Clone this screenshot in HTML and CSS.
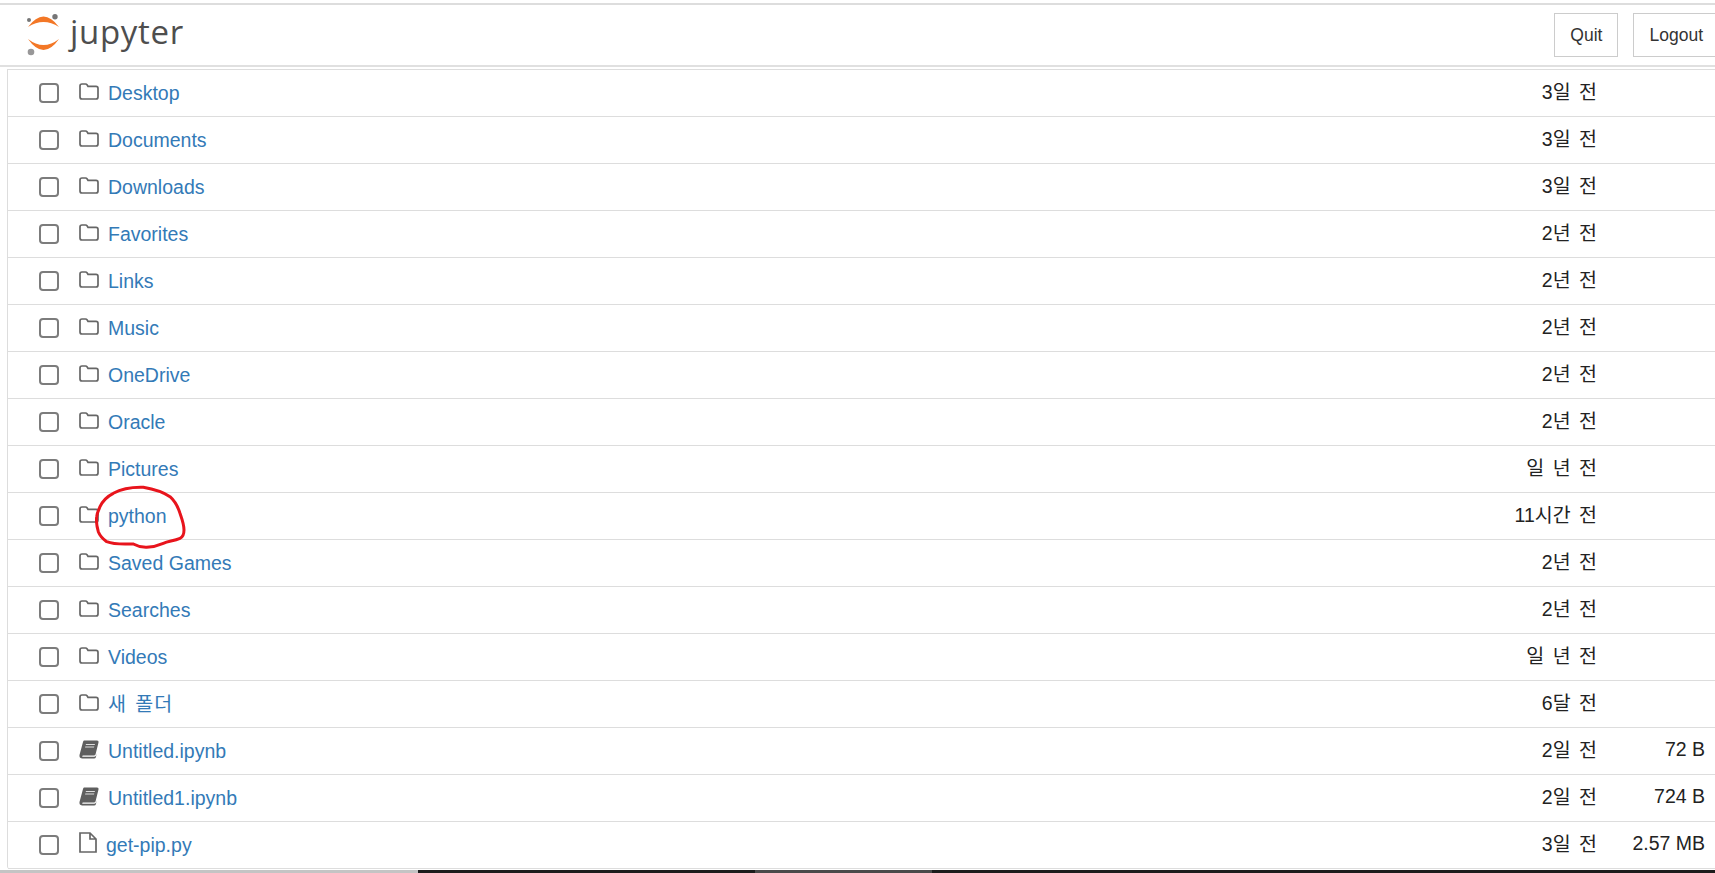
FILE: index.html
```html
<!DOCTYPE html>
<html>
<head>
    <meta charset="utf-8">
    <title>Home</title>
    <link rel="stylesheet" href="styles.css">
</head>
<body>
    <svg class="defs" width="0" height="0">
        <symbol id="folder" viewBox="0 0 20 17"><path d="M1 4 V3 Q1 1 3 1 H6.5 Q7.5 1 8.2 2 L9 3.4 H17 Q19 3.4 19 5.4 V14 Q19 16 17 16 H3 Q1 16 1 14 Z" fill="none" stroke="#666" stroke-width="1.7"/></symbol>
        <symbol id="book" viewBox="0 0 20 19"><path d="M5 0.5 H18 Q20 0.5 19.5 2.5 L16.5 14.5 Q16 15.5 15 15.5 H4 Q2.5 15.8 3.5 16.8 H15 Q16.5 16.8 17 15.5 L17.6 13 L17 17 Q16.5 18.5 15 18.5 H3 Q0 18 0.5 15 L4 2 Q4.3 0.5 5 0.5 Z" fill="#5f5f5f"/><path d="M7 4 H16 L15.7 5 H6.7 Z M6.3 6.5 H15.3 L15 7.5 H6 Z" fill="#ddd"/></symbol>
        <symbol id="file" viewBox="0 0 18 21"><path d="M1 1 H11 L17 7 V20 H1 Z M11 1 V7 H17" fill="none" stroke="#666" stroke-width="1.7"/></symbol>
    </svg>
    <div class="topline"></div>
    <div class="header">
        <div class="logo">
            <svg class="logomark" width="36" height="46" viewBox="0 0 36 46">
                <path d="M2 15 Q17.5 -6 33 15 Q17.5 5 2 15 Z" fill="#f37726"/>
                <path d="M2 27 Q17.5 49 33 27 Q17.5 39 2 27 Z" fill="#f37726"/>
                <circle cx="29" cy="4.7" r="2.7" fill="#767677"/>
                <circle cx="3" cy="8" r="2" fill="#767677"/>
                <circle cx="5" cy="40" r="3.3" fill="#989798"/>
            </svg>
            <span class="logotext">jupyter</span>
        </div>
        <div class="headbtns">
            <button class="hbtn">Quit</button>
            <button class="hbtn">Logout</button>
        </div>
    </div>
    <div class="wrapper">
        <div class="list">
            <div class="row"><span class="check"></span><svg class="ico folder"><use href="#folder"/></svg><a class="name">Desktop</a><span class="time">3일 전</span><span class="size"></span></div>
            <div class="row"><span class="check"></span><svg class="ico folder"><use href="#folder"/></svg><a class="name">Documents</a><span class="time">3일 전</span><span class="size"></span></div>
            <div class="row"><span class="check"></span><svg class="ico folder"><use href="#folder"/></svg><a class="name">Downloads</a><span class="time">3일 전</span><span class="size"></span></div>
            <div class="row"><span class="check"></span><svg class="ico folder"><use href="#folder"/></svg><a class="name">Favorites</a><span class="time">2년 전</span><span class="size"></span></div>
            <div class="row"><span class="check"></span><svg class="ico folder"><use href="#folder"/></svg><a class="name">Links</a><span class="time">2년 전</span><span class="size"></span></div>
            <div class="row"><span class="check"></span><svg class="ico folder"><use href="#folder"/></svg><a class="name">Music</a><span class="time">2년 전</span><span class="size"></span></div>
            <div class="row"><span class="check"></span><svg class="ico folder"><use href="#folder"/></svg><a class="name">OneDrive</a><span class="time">2년 전</span><span class="size"></span></div>
            <div class="row"><span class="check"></span><svg class="ico folder"><use href="#folder"/></svg><a class="name">Oracle</a><span class="time">2년 전</span><span class="size"></span></div>
            <div class="row"><span class="check"></span><svg class="ico folder"><use href="#folder"/></svg><a class="name">Pictures</a><span class="time">일 년 전</span><span class="size"></span></div>
            <div class="row"><span class="check"></span><svg class="ico folder"><use href="#folder"/></svg><a class="name">python</a><span class="time">11시간 전</span><span class="size"></span>
                <svg class="scribble" width="92" height="66" viewBox="0 0 92 66"><path d="M5 21.7 C8 15 13 11 18.3 8.3 C28 3 38 2 48.3 2.3 C58 4 68 7 75 11.7 C81 17 83 22 85 28.3 C87 34 89 39 89 45 C89 49 88 52 85 53.3 C79 56 74 56 68.3 58.3 C62 61 57 62 51.7 62.3 C46 62.5 42 61 38.3 59 C29 59 20 60 11.7 56.7 C8 54 5 51 3.3 46.7 C1.7 41 1 36 1.7 31.7 C2 28 3.5 25 5 21.7 Z" fill="none" stroke="#e8141c" stroke-width="3"/></svg>
            </div>
            <div class="row"><span class="check"></span><svg class="ico folder"><use href="#folder"/></svg><a class="name">Saved Games</a><span class="time">2년 전</span><span class="size"></span></div>
            <div class="row"><span class="check"></span><svg class="ico folder"><use href="#folder"/></svg><a class="name">Searches</a><span class="time">2년 전</span><span class="size"></span></div>
            <div class="row"><span class="check"></span><svg class="ico folder"><use href="#folder"/></svg><a class="name">Videos</a><span class="time">일 년 전</span><span class="size"></span></div>
            <div class="row"><span class="check"></span><svg class="ico folder"><use href="#folder"/></svg><a class="name ko">새 폴더</a><span class="time">6달 전</span><span class="size"></span></div>
            <div class="row"><span class="check"></span><svg class="ico book"><use href="#book"/></svg><a class="name">Untitled.ipynb</a><span class="time">2일 전</span><span class="size">72 B</span></div>
            <div class="row"><span class="check"></span><svg class="ico book"><use href="#book"/></svg><a class="name">Untitled1.ipynb</a><span class="time">2일 전</span><span class="size">724 B</span></div>
            <div class="row"><span class="check"></span><svg class="ico file"><use href="#file"/></svg><a class="name py">get-pip.py</a><span class="time">3일 전</span><span class="size">2.57 MB</span></div>
        </div>
    </div>
    <div class="bottombar">
        <div class="bar1"></div><div class="bar2"></div><div class="bar3"></div><div class="bar4"></div>
    </div>
</body>
</html>
```
FILE: styles.css
```css
html, body {
    margin: 0;
    height: 873px;
    overflow: hidden;
    background: #fff;
    font-family: "Liberation Sans", "Noto Sans CJK KR", sans-serif;
    color: #000;
}

.defs {
    display: block;
    height: 0;
}

.topline {
    height: 2px;
    margin-top: 3px;
    background: #ddd;
}

/*header*/
.header {
    height: 62px;
    box-sizing: border-box;
    display: flex;
    align-items: center;
    justify-content: space-between;
    border-bottom: 2px solid #e0e0e0;
}

.logo {
    display: flex;
    align-items: center;
    padding-left: 26px;
}

.logotext {
    font-family: "Open Sans", sans-serif;
    font-size: 33px;
    color: #4e4e4e;
    margin-left: 8px;
    letter-spacing: 0.7px;
    line-height: 40px;
    margin-top: -6px;
}

.headbtns {
    display: flex;
    gap: 15px;
    margin-right: -4px;
}

.hbtn {
    height: 44px;
    padding: 0 15px;
    border: 1px solid #ccc;
    background: #fff;
    color: #333;
    font-family: "Liberation Sans", sans-serif;
    font-size: 17.5px;
}

/*list*/
.wrapper {
    margin-top: 2px;
    padding-left: 7px;
}

.list {
    border-top: 1px solid #ddd;
    border-left: 1px solid #ddd;
    border-bottom-left-radius: 3px;
}

.row {
    position: relative;
    height: 47px;
    box-sizing: border-box;
    border-bottom: 1px solid #ddd;
    display: flex;
    align-items: center;
    font-size: 19.5px;
}

.check {
    width: 16px;
    height: 16px;
    margin-left: 31px;
    border: 2px solid #7c7c7c;
    border-radius: 4px;
    flex: none;
}

.ico {
    margin-left: 20px;
    flex: none;
}

.folder {
    width: 20px;
    height: 17px;
    margin-top: -3px;
}

.book {
    width: 20px;
    height: 19px;
    margin-top: -3px;
}

.file {
    width: 18px;
    height: 21px;
    margin-bottom: 6px;
}

.name {
    margin-left: 9px;
    color: #337ab7;
    flex: 1;
}

.ko {
    letter-spacing: 1px;
    word-spacing: 2px;
    margin-top: -4px;
}

.time {
    width: 200px;
    text-align: right;
    color: #222;
    margin-top: -6px;
    word-spacing: 3px;
}

.size {
    width: 108px;
    margin-right: 10px;
    text-align: right;
    color: #222;
    margin-top: -4px;
    flex: none;
}

.scribble {
    position: absolute;
    left: 87px;
    top: -8px;
}

/*stripe at the bottom*/
.bottombar {
    display: flex;
    height: 3px;
    margin-top: 1px;
}

.bar1 { width: 418px; background: #c4c4c4; }
.bar2 { width: 337px; background: #1c1c1c; }
.bar3 { width: 177px; background: #4a4a4a; }
.bar4 { flex: 1; background: #1c1c1c; }
```
